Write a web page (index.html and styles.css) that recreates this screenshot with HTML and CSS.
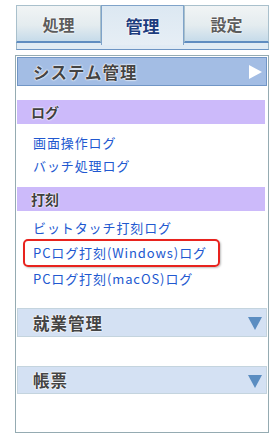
FILE: index.html
```html
<!DOCTYPE html>
<html lang="ja">
<head>
    <meta charset="UTF-8">
    <meta name="viewport" content="width=device-width, initial-scale=1.0">
    <title>管理メニュー</title>
    <link rel="stylesheet" href="styles.css">
</head>
<body>
    <div class="tabs">
        <div class="tab">処理</div>
        <div class="tab active">管理</div>
        <div class="tab">設定</div>
    </div>
    <div class="tab-bar"></div>

    <div class="panel">
        <div class="menu-head open">
            <span>システム管理</span>
            <span class="arrow-right"></span>
        </div>

        <div class="group first">ログ</div>
        <a class="link" href="#">画面操作ログ</a>
        <a class="link" href="#">バッチ処理ログ</a>

        <div class="group second">打刻</div>
        <a class="link" href="#">ビットタッチ打刻ログ</a>
        <a class="link marked" href="#">PCログ打刻(Windows)ログ</a>
        <a class="link" href="#">PCログ打刻(macOS)ログ</a>

        <div class="menu-head closed work">
            <span>就業管理</span>
            <span class="arrow-down"></span>
        </div>
        <div class="menu-head closed report">
            <span>帳票</span>
            <span class="arrow-down"></span>
        </div>
    </div>
</body>
</html>
```

FILE: styles.css
```css
body {
    margin: 0;
    background: #fff;
    font-family: "Noto Sans CJK JP", "Liberation Sans", sans-serif;
}
.tabs {
    display: flex;
    margin: 5px 0 0 16px;
    width: 253px;
    height: 38px;
}
.tab {
    flex: 1;
    box-sizing: border-box;
    border: 1px solid #a9c0cc;
    border-bottom: 2px solid #5f8cc0;
    background: linear-gradient(#f1f4f5, #e4ecef 55%, #c6dbea);
    color: #5c5c5c;
    font-size: 16px;
    font-weight: bold;
    text-align: center;
    line-height: 36px;
    text-shadow: 0 0 2px #fff, 0 0 2px #fff;
}
.tab.active {
    border-color: #7fa3c9;
    border-bottom: none;
    background: linear-gradient(#dce8f2, #e6eef5);
    color: #1d3d7e;
    font-size: 17px;
    line-height: 40px;
    height: 40px;
    position: relative;
    z-index: 1;
}
.tab:first-child,
.tab:last-child {
    width: 85px;
    flex: none;
}
.tab-bar {
    margin: -1px 0 0 16px;
    width: 253px;
    height: 8px;
    box-sizing: border-box;
    background: #e1ebf4;
    border: 1px solid #6d95c4;
    border-top: none;
    border-left-color: #9db6c4;
    border-right-color: #9db6c4;
}
.panel {
    margin: 5px 0 0 15px;
    width: 254px;
    height: 378px;
    box-sizing: border-box;
    border: 1px solid #95abb2;
    padding: 0 1px;
}
.menu-head {
    display: flex;
    justify-content: space-between;
    align-items: center;
    height: 29px;
    box-sizing: border-box;
    padding: 0 4px 0 15px;
    margin-top: 1px;
    font-size: 16.5px;
    font-weight: bold;
    letter-spacing: 1px;
    color: #444;
    text-shadow: 0 0 2px #fff, 0 0 2px #fff, 0 0 1px #fff;
}
.menu-head.open {
    background: #a3bde4;
    border: 1px solid #7196c6;
}
.menu-head.closed {
    background: #d4e1f3;
    border: 1px solid #c4d4de;
}
.menu-head.work {
    margin-top: 18px;
}
.menu-head.report {
    margin-top: 29px;
    height: 28px;
}
.arrow-right {
    width: 0;
    height: 0;
    border-top: 7px solid transparent;
    border-bottom: 7px solid transparent;
    border-left: 13px solid #fff;
}
.arrow-down {
    width: 0;
    height: 0;
    border-left: 7px solid transparent;
    border-right: 7px solid transparent;
    border-top: 13px solid #5b8dc1;
    margin-top: 2px;
}
.group {
    margin-right: 2px;
    height: 24px;
    background: #ccbafa;
    padding-left: 14px;
    font-size: 14px;
    font-weight: bold;
    line-height: 24px;
    color: #3f3f3f;
    text-shadow: 0 0 2px #fff, 0 0 2px #fff;
}
.group.first {
    margin-top: 14px;
    margin-bottom: 7px;
}
.group.second {
    margin-top: 10px;
    margin-bottom: 5px;
}
.link {
    display: block;
    height: 23px;
    line-height: 23px;
    padding-left: 16px;
    font-size: 13px;
    letter-spacing: 0.9px;
    color: #2158d0;
    text-decoration: none;
    white-space: nowrap;
}
.marked {
    margin-left: 6px;
    width: 197px;
    height: 28px;
    line-height: 24px;
    box-sizing: border-box;
    padding-left: 8px;
    border: 2px solid #e8231e;
    border-radius: 5px;
    box-shadow: 1px 1px 2px rgba(0, 0, 0, 0.25);
}
```
